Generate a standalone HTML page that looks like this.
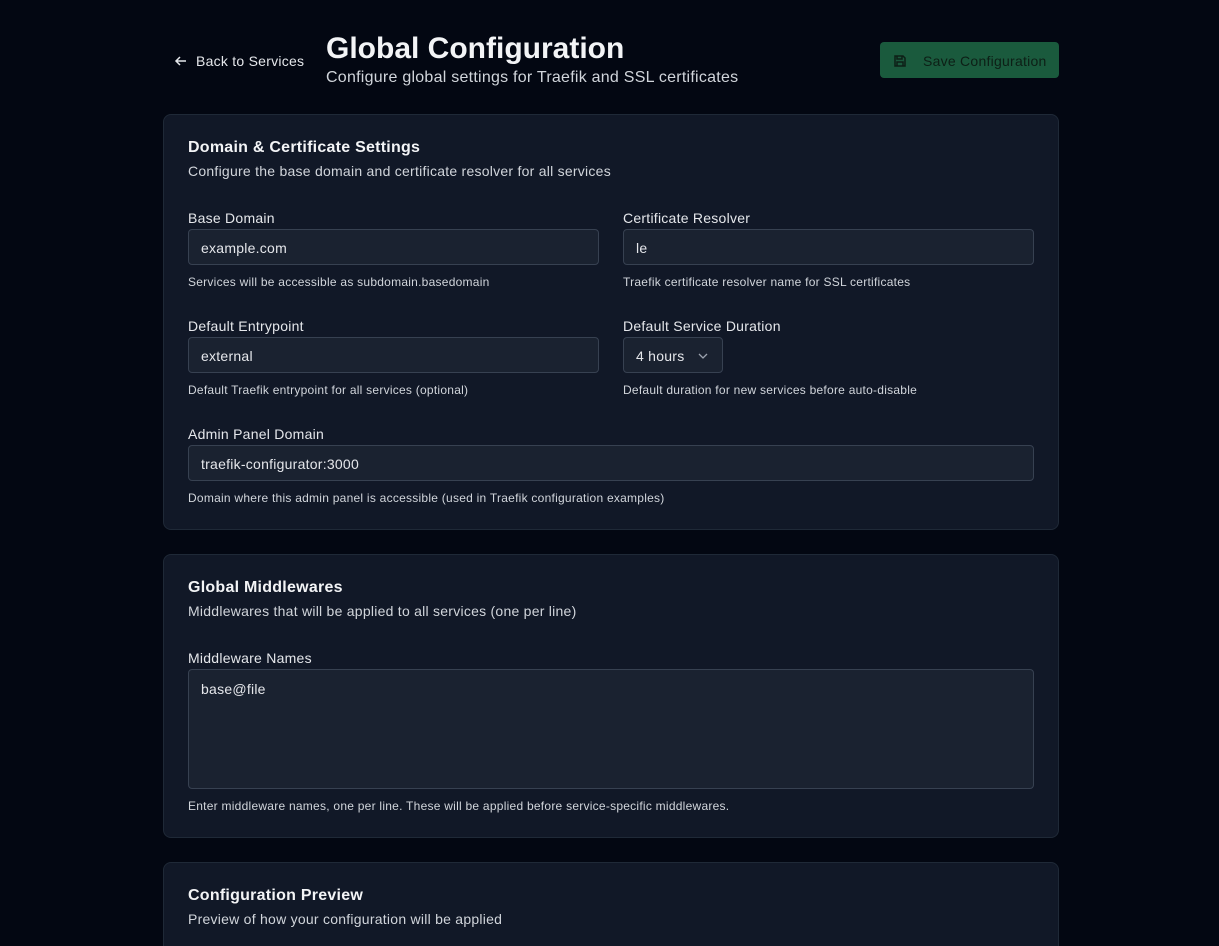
<!DOCTYPE html>
<html><head><meta charset="utf-8"><style>
*{box-sizing:border-box;margin:0;padding:0}
html,body{overflow:hidden}
body{background:#030712;color:#e5e7eb;font-family:"Liberation Sans",sans-serif;width:1219px;height:946px;position:relative;letter-spacing:0.25px}
.back{position:absolute;left:174px;top:53px;font-size:14px;color:#e5e7eb;display:flex;align-items:center;gap:8px}
h1{position:absolute;left:326px;top:32px;font-size:30px;font-weight:bold;color:#f3f4f6;letter-spacing:0}
.sub{position:absolute;left:326px;top:69px;font-size:16px;color:#d1d5db}
.save{position:absolute;left:880px;top:42px;width:179px;height:36px;background:#1a5a3d;border-radius:4px;color:#0d1f16;font-size:14px;display:flex;align-items:center;padding-left:13px;gap:16px;padding-top:2px}
.card{position:absolute;left:163px;width:896px;background:#111827;border:1px solid #1f2937;border-radius:8px;padding:24px 24px}
.card h2{font-size:16px;font-weight:bold;color:#f3f4f6}
.card .d{font-size:14px;color:#d1d5db;margin-top:6px}
.f{position:absolute}
.f label{display:block;font-size:14px;color:#e5e7eb;padding-top:1px}
.f .in{margin-top:3px;height:36px;background:#1a2230;border:1px solid #374151;border-radius:4px;padding:1px 12px 0;display:flex;align-items:center;font-size:14px;color:#e5e7eb}
.f .h{font-size:12px;color:#d1d5db;margin-top:10px}
</style></head><body>
<div class="back"><svg width="14" height="14" viewBox="0 0 14 14" fill="none" stroke="#e5e7eb" stroke-width="1.5"><path d="M12 7H2M6 3L2 7l4 4"/></svg>Back to Services</div>
<h1>Global Configuration</h1>
<div class="sub">Configure global settings for Traefik and SSL certificates</div>
<div class="save"><svg width="14" height="14" viewBox="0 0 14 14" fill="none" stroke="#0d1f16" stroke-width="1.5"><path d="M2 2h8l2 2v8H2z M4 2v3h5V2 M4 12V8h6v4"/></svg>Save Configuration</div>

<div class="card" style="top:114px;height:416px">
<h2>Domain &amp; Certificate Settings</h2>
<div class="d">Configure the base domain and certificate resolver for all services</div>
<div class="f" style="left:24px;top:94px;width:411px"><label>Base Domain</label><div class="in">example.com</div><div class="h">Services will be accessible as subdomain.basedomain</div></div>
<div class="f" style="left:459px;top:94px;width:411px"><label>Certificate Resolver</label><div class="in">le</div><div class="h">Traefik certificate resolver name for SSL certificates</div></div>
<div class="f" style="left:24px;top:202px;width:411px"><label>Default Entrypoint</label><div class="in">external</div><div class="h">Default Traefik entrypoint for all services (optional)</div></div>
<div class="f" style="left:459px;top:202px;width:411px"><label>Default Service Duration</label><div class="in" style="width:100px">4 hours<svg style="margin-left:14px" width="10" height="6" viewBox="0 0 10 6" fill="none" stroke="#9ca3af" stroke-width="1.3"><path d="M1 1l4 4 4-4"/></svg></div><div class="h">Default duration for new services before auto-disable</div></div>
<div class="f" style="left:24px;top:310px;width:846px"><label>Admin Panel Domain</label><div class="in">traefik-configurator:3000</div><div class="h">Domain where this admin panel is accessible (used in Traefik configuration examples)</div></div>
</div>

<div class="card" style="top:554px;height:284px">
<h2>Global Middlewares</h2>
<div class="d">Middlewares that will be applied to all services (one per line)</div>
<div class="f" style="left:24px;top:94px;width:846px"><label>Middleware Names</label><div class="in" style="height:120px;align-items:flex-start;padding-top:11px">base@file</div><div class="h">Enter middleware names, one per line. These will be applied before service-specific middlewares.</div></div>
</div>

<div class="card" style="top:862px;height:120px">
<h2>Configuration Preview</h2>
<div class="d">Preview of how your configuration will be applied</div>
</div>
</body></html>
